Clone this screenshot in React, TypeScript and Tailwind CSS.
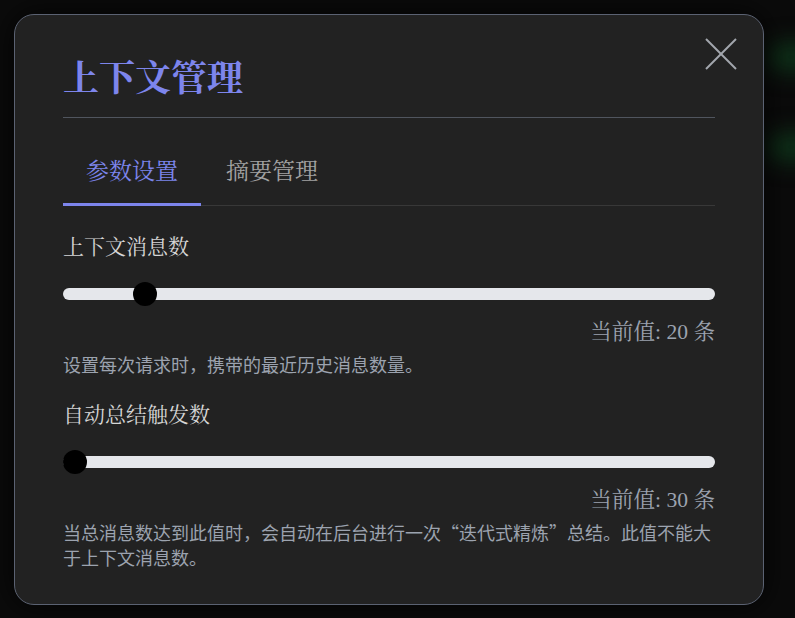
import React from "react"

const font = {
  fontFamily: '"Liberation Serif", "Noto Serif CJK SC", "Noto Sans CJK SC", serif',
}

const cjk = {
  fontFamily: '"Noto Sans CJK SC", "Liberation Serif", serif',
}

function Slider({ value, min, max }: { value: number; min: number; max: number }) {
  const pct = Math.max(0, Math.min(1, (value - min) / (max - min)))
  return (
    <div className="relative mt-[21px] h-6 flex items-center">
      <div className="h-3 w-full rounded-full bg-[#e5e7eb]" />
      <div
        className="absolute top-0 h-6 w-6 rounded-full bg-black"
        style={{ left: `calc(${pct} * (100% - 24px))` }}
      />
    </div>
  )
}

function Setting({
  label,
  value,
  min,
  max,
  shown,
  desc,
}: {
  label: string
  value: number
  min: number
  max: number
  shown: number
  desc: string
}) {
  return (
    <div className="flex flex-col">
      <div className="text-[21px] leading-[28px] text-[#d6d6d6]">{label}</div>
      <Slider value={value} min={min} max={max} />
      <div className="mt-3 text-right text-[21.6px] leading-[28px] text-[#9ca3af]">
        当前值: {shown} 条
      </div>
      <p className="mt-[6px] text-[18px] leading-[25px] text-[#9ca3af]" style={cjk}>
        {desc}
      </p>
    </div>
  )
}

export default function App() {
  return (
    <div className="relative min-h-[618px] w-full overflow-hidden bg-[#0b0b0b] pl-[14px] pt-[14px]" style={font}>
      <div className="absolute right-[-20px] top-[45px] h-6 w-12 rounded-full bg-[#0f3a1c] blur-md" />
      <div className="absolute right-[-20px] top-[135px] h-6 w-12 rounded-full bg-[#0f3a1c] blur-md" />

      <div className="relative w-[750px] rounded-[20px] border border-[#5b6272] bg-[#222222] px-12 pb-[34px] pt-[46px] shadow-[0_0_30px_rgba(0,0,0,0.8)]">
        <button className="absolute right-[26px] top-[23px] text-[#a3a7ae]">
          <svg width="32" height="32" viewBox="0 0 32 32" fill="none" stroke="currentColor" strokeWidth="2">
            <line x1="1" y1="1" x2="31" y2="31" />
            <line x1="31" y1="1" x2="1" y2="31" />
          </svg>
        </button>

        <div className="border-b border-[#50555e] pb-5">
          <h2 className="text-[36px] font-bold leading-[36px] text-[#7d85ec]">上下文管理</h2>
        </div>

        <div className="mt-[26px] flex border-b border-[#383838]">
          <button className="-mb-px border-b-[3px] border-[#7d85ec] px-[23px] pb-[15px] pt-3 text-[23px] leading-[32px] text-[#7d85ec]">
            参数设置
          </button>
          <button className="-mb-px border-b-[3px] border-transparent pl-[25px] pr-[23px] pb-[15px] pt-3 text-[23px] leading-[32px] text-[#a3a3a3]">
            摘要管理
          </button>
        </div>

        <div className="mt-[27px] flex flex-col gap-6">
          <Setting
            label="上下文消息数"
            value={20}
            min={10}
            max={100}
            shown={20}
            desc="设置每次请求时，携带的最近历史消息数量。"
          />
          <Setting
            label="自动总结触发数"
            value={30}
            min={30}
            max={200}
            shown={30}
            desc="当总消息数达到此值时，会自动在后台进行一次“迭代式精炼”总结。此值不能大于上下文消息数。"
          />
        </div>
      </div>
    </div>
  )
}
